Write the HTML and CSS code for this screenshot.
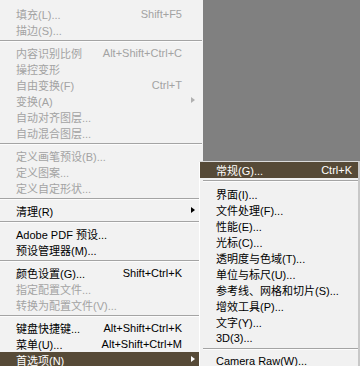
FILE: index.html
```html
<!DOCTYPE html>
<html>
<head>
<meta charset="utf-8">
<link rel="stylesheet" href="styles.css">
</head>
<body>
<div class="screen">
  <div class="menu">
    <div class="item off"><span class="label">填充(L)...</span><span class="key">Shift+F5</span></div>
    <div class="item off"><span class="label">描边(S)...</span></div>
    <div class="sep"></div>
    <div class="item off"><span class="label">内容识别比例</span><span class="key">Alt+Shift+Ctrl+C</span></div>
    <div class="item off"><span class="label">操控变形</span></div>
    <div class="item off"><span class="label">自由变换(F)</span><span class="key">Ctrl+T</span></div>
    <div class="item off sub"><span class="label">变换(A)</span><span class="arrow"></span></div>
    <div class="item off"><span class="label">自动对齐图层...</span></div>
    <div class="item off"><span class="label">自动混合图层...</span></div>
    <div class="sep"></div>
    <div class="item off"><span class="label">定义画笔预设(B)...</span></div>
    <div class="item off"><span class="label">定义图案...</span></div>
    <div class="item off"><span class="label">定义自定形状...</span></div>
    <div class="sep"></div>
    <div class="item sub"><span class="label">清理(R)</span><span class="arrow"></span></div>
    <div class="sep"></div>
    <div class="item"><span class="label">Adobe PDF 预设...</span></div>
    <div class="item"><span class="label">预设管理器(M)...</span></div>
    <div class="sep"></div>
    <div class="item"><span class="label">颜色设置(G)...</span><span class="key">Shift+Ctrl+K</span></div>
    <div class="item off"><span class="label">指定配置文件...</span></div>
    <div class="item off"><span class="label">转换为配置文件(V)...</span></div>
    <div class="sep"></div>
    <div class="item"><span class="label">键盘快捷键...</span><span class="key">Alt+Shift+Ctrl+K</span></div>
    <div class="item"><span class="label">菜单(U)...</span><span class="key">Alt+Shift+Ctrl+M</span></div>
    <div class="item sub active"><span class="label">首选项(N)</span><span class="arrow"></span></div>
  </div>
  <div class="canvas"></div>
  <div class="submenu">
    <div class="item active"><span class="label">常规(G)...</span><span class="key">Ctrl+K</span></div>
    <div class="sep sep-wide"></div>
    <div class="item"><span class="label">界面(I)...</span></div>
    <div class="item"><span class="label">文件处理(F)...</span></div>
    <div class="item"><span class="label">性能(E)...</span></div>
    <div class="item"><span class="label">光标(C)...</span></div>
    <div class="item"><span class="label">透明度与色域(T)...</span></div>
    <div class="item"><span class="label">单位与标尺(U)...</span></div>
    <div class="item"><span class="label">参考线、网格和切片(S)...</span></div>
    <div class="item"><span class="label">增效工具(P)...</span></div>
    <div class="item"><span class="label">文字(Y)...</span></div>
    <div class="item"><span class="label">3D(3)...</span></div>
    <div class="sep"></div>
    <div class="item"><span class="label">Camera Raw(W)...</span></div>
  </div>
</div>
</body>
</html>
```

FILE: styles.css
```css
html, body {
  margin: 0;
  padding: 0;
}
body {
  width: 360px;
  height: 366px;
  overflow: hidden;
  background: #f1f1f1;
  font-family: "Liberation Sans", "Noto Sans CJK SC", sans-serif;
  font-size: 11px;
  color: #000;
}
.screen {
  position: relative;
  display: flex;
  width: 360px;
  height: 366px;
  overflow: hidden;
}
.menu {
  width: 203px;
  flex: none;
  padding-top: 6px;
  background: #f2f2f2;
  box-sizing: border-box;
}
.canvas {
  flex: 1;
  height: 161px;
  background: #808080;
}
.item {
  height: 16px;
  display: flex;
  align-items: center;
  padding: 0 17px 0 16px;
  white-space: nowrap;
  position: relative;
}
.menu .item {
  width: 199px;
  box-sizing: border-box;
}
.label {
  flex: 1;
}
.key {
  flex: none;
}
.off {
  color: #a3a3a3;
}
.arrow {
  position: absolute;
  right: 4px;
  top: 4px;
  width: 0;
  height: 0;
  border-top: 3.5px solid transparent;
  border-bottom: 3.5px solid transparent;
  border-left: 4px solid #000;
}
.off .arrow {
  border-left-color: #b0b0b0;
}
.active {
  background: #564a37;
  color: #fff;
}
.active .arrow {
  border-left-color: #fff;
}
.sep {
  height: 7px;
  box-sizing: border-box;
  padding-top: 2px;
}
.sep::before {
  content: "";
  display: block;
  height: 1px;
  background: #a4a4a4;
  border-bottom: 1px solid #fcfcfc;
}
.menu .sep::before {
  width: 202px;
}
.submenu {
  position: absolute;
  left: 199px;
  top: 161px;
  width: 161px;
  height: 210px;
  box-sizing: border-box;
  background: #f1f1f1;
  border-left: 1px solid #fff;
  border-top: 1px solid #dcdcdc;
  border-right: 2px solid #c8c8c8;
}
.submenu .item {
  padding: 0 6px 0 16px;
}
.submenu .sep {
  padding-left: 3px;
}
.submenu .sep-wide {
  height: 8px;
}
```
